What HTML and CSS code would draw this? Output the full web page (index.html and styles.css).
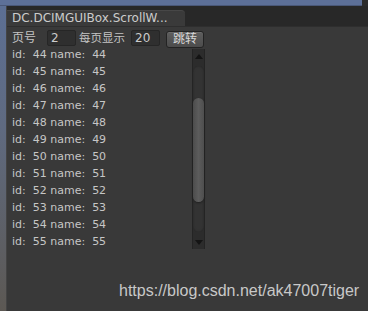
FILE: index.html
```html
<!DOCTYPE html>
<html>
<head>
<meta charset="utf-8">
<link rel="stylesheet" href="styles.css">
</head>
<body>
<div class="window">
  <div class="topbar"><div class="topblue"></div><div class="topdark"></div></div>
  <div class="body">
    <div class="leftstrip"></div>
    <div class="main">
      <div class="tabs"><div class="tab">DC.DCIMGUIBox.ScrollW...</div></div>
      <div class="panel">
        <div class="toolbar">
          <span class="label">页号</span>
          <span class="field f1">2</span>
          <span class="label l2">每页显示</span>
          <span class="field f2">20</span>
          <span class="btn">跳转</span>
        </div>
        <div class="scrollview">
          <div class="viewport">
            <div class="rows">
              <div class="row">id:  44 name:  44</div>
              <div class="row">id:  45 name:  45</div>
              <div class="row">id:  46 name:  46</div>
              <div class="row">id:  47 name:  47</div>
              <div class="row">id:  48 name:  48</div>
              <div class="row">id:  49 name:  49</div>
              <div class="row">id:  50 name:  50</div>
              <div class="row">id:  51 name:  51</div>
              <div class="row">id:  52 name:  52</div>
              <div class="row">id:  53 name:  53</div>
              <div class="row">id:  54 name:  54</div>
              <div class="row">id:  55 name:  55</div>
            </div>
          </div>
          <div class="scrollbar">
            <div class="arrow up"></div>
            <div class="groove">
              <div class="gap-top"></div>
              <div class="thumb"></div>
            </div>
            <div class="arrow down"></div>
          </div>
        </div>
      </div>
    </div>
  </div>
  <div class="watermark">https://blog.csdn.net/ak47007tiger</div>
</div>
</body>
</html>
```
FILE: styles.css
```css
html, body {
  margin: 0;
  padding: 0;
  background: #393939;
}
.window {
  position: relative;
  width: 368px;
  height: 311px;
  overflow: hidden;
  display: flex;
  flex-direction: column;
  font-family: "DejaVu Sans", "Noto Sans CJK SC", sans-serif;
  color: #c4c4c4;
}
.topbar {
  display: flex;
  height: 6px;
  flex: none;
}
.topblue {
  width: 362px;
  background: #5d7098;
  border-bottom: 1px solid #4a5878;
  box-sizing: border-box;
}
.topdark {
  flex: 1;
  background: #2b2b2b;
}
.body {
  flex: 1;
  display: flex;
}
.leftstrip {
  width: 7px;
  flex: none;
  background: linear-gradient(to bottom, #5c6f94 0%, #5f6a80 40%, #5c5853 100%);
  border-right: 1px solid #444444;
  box-sizing: border-box;
}
.main {
  flex: 1;
  display: flex;
  flex-direction: column;
}
.tabs {
  height: 21px;
  flex: none;
  background: #282828;
  display: flex;
  align-items: flex-end;
  border-bottom: 1px solid #2e2e2e;
  box-sizing: border-box;
}
.tab {
  width: 178px;
  height: 16px;
  background: #3a3a3a;
  border-radius: 0 4px 0 0;
  border-top: 1px solid #474747;
  box-sizing: border-box;
  padding-left: 5px;
  font-size: 12px;
  line-height: 15px;
  color: #cccccc;
  white-space: nowrap;
  overflow: hidden;
}
.panel {
  flex: 1;
  background: #393939;
  display: flex;
  flex-direction: column;
}
.toolbar {
  display: flex;
  align-items: center;
  height: 20px;
  padding-top: 1px;
  padding-left: 5px;
  font-size: 12px;
}
.label {
  line-height: 16px;
}
.l2 {
  margin-left: 3px;
  font-size: 11.5px;
}
.field {
  box-sizing: border-box;
  height: 16px;
  width: 29px;
  margin-left: 11px;
  background: #2f2f2f;
  border: 1px solid #262626;
  border-radius: 2px;
  padding-left: 3px;
  line-height: 14px;
  font-size: 12px;
  color: #cccccc;
}
.f2 {
  margin-left: 6px;
}
.btn {
  box-sizing: border-box;
  margin-left: 6px;
  margin-top: 3px;
  width: 38px;
  height: 17px;
  border: 1px solid #232323;
  border-radius: 3px;
  background: linear-gradient(to bottom, #5e5e5e, #4c4c4c);
  box-shadow: inset 0 1px 0 #6a6a6a;
  color: #d8d8d8;
  font-size: 12px;
  line-height: 15px;
  text-align: center;
}
.scrollview {
  display: flex;
  height: 200px;
  margin-top: 1px;
}
.viewport {
  width: 185px;
  overflow: hidden;
}
.rows {
  margin-top: -3px;
}
.row {
  height: 17px;
  line-height: 17px;
  padding-left: 5px;
  font-size: 11px;
  color: #c6c6c6;
  white-space: pre;
}
.scrollbar {
  width: 13px;
  box-sizing: border-box;
  background: #2c2c2c;
  border-left: 1px solid #242424;
  border-right: 1px solid #242424;
  display: flex;
  flex-direction: column;
  align-items: center;
}
.arrow {
  height: 14px;
  flex: none;
  width: 100%;
  display: flex;
  align-items: center;
  justify-content: center;
}
.arrow.up::before {
  content: "";
  border-left: 4px solid transparent;
  border-right: 4px solid transparent;
  border-bottom: 5px solid #141414;
}
.arrow.down::before {
  content: "";
  border-left: 4px solid transparent;
  border-right: 4px solid transparent;
  border-top: 5px solid #141414;
}
.groove {
  flex: 1;
  width: 11px;
  margin: 3px 0;
  background: #333333;
  border-radius: 6px;
  box-shadow: inset 0 0 2px #222;
  display: flex;
  flex-direction: column;
}
.gap-top {
  height: 32px;
}
.thumb {
  height: 104px;
  background: linear-gradient(to right, #4c4c4c, #5c5c5c 50%, #4e4e4e);
  border-radius: 6px;
  box-shadow: 0 1px 2px #202020;
}
.watermark {
  position: absolute;
  left: 119px;
  top: 282px;
  font-family: "Liberation Sans", Arial, sans-serif;
  font-size: 16px;
  line-height: 18px;
  color: #c8c8c8;
  white-space: nowrap;
}
```
